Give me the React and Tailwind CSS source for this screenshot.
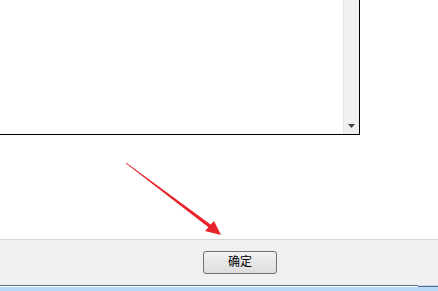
import React from "react";

const App = () => {
  return (
    <div
      className="relative w-[438px] h-[291px] overflow-hidden bg-white"
      style={{ fontFamily: '"Liberation Sans", "Noto Sans CJK SC", sans-serif' }}
    >
      {/* list box */}
      <div className="h-[239px] bg-white">
        <div className="flex w-[360px] h-[135px] bg-white border-r border-b border-black">
          <div className="flex-1" />
          <div className="w-[16px] h-full flex flex-col justify-end items-center bg-[#f0f0f0] border-l border-[#e6e6e6] pb-[6px]">
            <svg width="7" height="4" viewBox="0 0 7 4">
              <path d="M0 0 H7 L3.5 4 Z" fill="#404040" />
            </svg>
          </div>
        </div>
      </div>

      {/* bottom bar */}
      <div className="h-[46px] bg-[#f0f0f0] border-t border-[#d5d5d5] flex items-start justify-center pl-[42px] pt-[11px]">
        <button className="w-[74px] h-[23px] rounded-[3px] border border-[#707070] bg-gradient-to-b from-[#f2f2f2] to-[#dddddd] text-[12px] leading-[21px] text-black">
          确定
        </button>
      </div>
      <div className="flex h-[2px]">
        <div className="w-[418px] h-[1px] bg-[#5d6e82]" />
        <div className="flex-1 h-[2px] flex flex-col">
          <div className="h-[1px] bg-[#b8d7f5]" />
          <div className="h-[1px] bg-[#5d6e82]" />
        </div>
      </div>
      <div className="h-[4px] bg-[#b8d9f8]" />

      {/* red arrow */}
      <svg className="absolute left-0 top-0" width="438" height="291" viewBox="0 0 438 291">
        <path d="M126 162.5 L126 163.5 L212 230 L214 227 Z" fill="#e8232a" />
        <path d="M221 235 L205 231 L214 221 Z" fill="#e8232a" />
      </svg>
    </div>
  );
};

export default App;
